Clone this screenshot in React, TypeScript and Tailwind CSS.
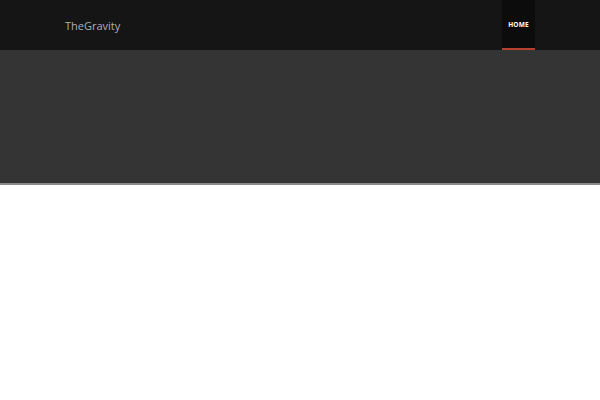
export default function App() {
  return (
    <div className="min-h-[400px] bg-white" style={{ fontFamily: '"Open Sans", "Liberation Sans", sans-serif' }}>
      <header className="h-[50px] bg-[#151515] flex items-stretch justify-between pl-[65px] pr-[65px]">
        <div className="flex items-center pt-[2px] text-[11px] text-[#b0b0b0]">TheGravity</div>
        <nav className="flex items-stretch">
          <a className="flex items-center pt-[2px] w-[33px] justify-center bg-[#0c0c0c] border-b-2 border-[#b8402e] text-[6.5px] font-bold text-white uppercase tracking-[0.2px]">
            Home
          </a>
        </nav>
      </header>
      <section className="h-[135px] bg-[#343434] border-b-2 border-[#8a8a8a]" />
    </div>
  );
}
